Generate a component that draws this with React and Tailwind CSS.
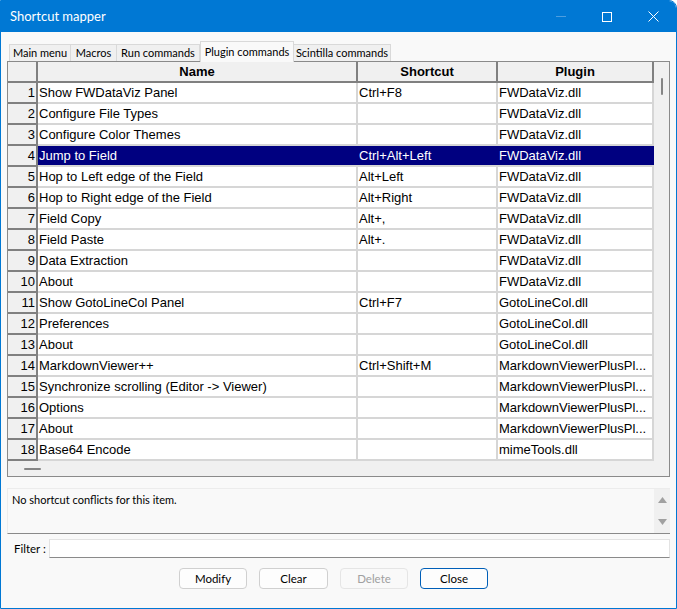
import React from "react";

const rows = [
    ["Show FWDataViz Panel", "Ctrl+F8", "FWDataViz.dll"],
    ["Configure File Types", "", "FWDataViz.dll"],
    ["Configure Color Themes", "", "FWDataViz.dll"],
    ["Jump to Field", "Ctrl+Alt+Left", "FWDataViz.dll"],
    ["Hop to Left edge of the Field", "Alt+Left", "FWDataViz.dll"],
    ["Hop to Right edge of the Field", "Alt+Right", "FWDataViz.dll"],
    ["Field Copy", "Alt+,", "FWDataViz.dll"],
    ["Field Paste", "Alt+.", "FWDataViz.dll"],
    ["Data Extraction", "", "FWDataViz.dll"],
    ["About", "", "FWDataViz.dll"],
    ["Show GotoLineCol Panel", "Ctrl+F7", "GotoLineCol.dll"],
    ["Preferences", "", "GotoLineCol.dll"],
    ["About", "", "GotoLineCol.dll"],
    ["MarkdownViewer++", "Ctrl+Shift+M", "MarkdownViewerPlusPl..."],
    ["Synchronize scrolling (Editor -> Viewer)", "", "MarkdownViewerPlusPl..."],
    ["Options", "", "MarkdownViewerPlusPl..."],
    ["About", "", "MarkdownViewerPlusPl..."],
    ["Base64 Encode", "", "mimeTools.dll"],
];

const tabs = [
    { label: "Main menu", w: "w-[62px]" },
    { label: "Macros", w: "w-[46px]" },
    { label: "Run commands", w: "w-[83px]" },
    { label: "Plugin commands", w: "w-[94px]", active: true },
    { label: "Scintilla commands", w: "w-[97px]" },
];

export default function App() {
    const selected = 3;

    return (
        <div className="w-[677px] h-[609px] flex flex-col bg-[#f9f9f9] border border-[#0078d4] rounded-tr-lg overflow-hidden font-['Lato',sans-serif] text-[11px] text-black">

            {/* TITLE BAR */}
            <div className="h-[31px] shrink-0 bg-[#0078d4] flex items-center pl-[9px] text-white">
                <span className="text-[13px] flex-1">Shortcut mapper</span>
                <div className="flex items-center h-full">
                    <div className="w-[46px] h-full flex items-center justify-center">
                        <div className="w-[10px] h-px bg-[#4d9ee0]"></div>
                    </div>
                    <div className="w-[46px] h-full flex items-center justify-center">
                        <div className="w-[10px] h-[10px] border border-white"></div>
                    </div>
                    <div className="w-[46px] h-full flex items-center justify-center">
                        <svg width="11" height="11" viewBox="0 0 11 11">
                            <path d="M0.5 0.5 L10.5 10.5 M10.5 0.5 L0.5 10.5" stroke="white" strokeWidth="1" />
                        </svg>
                    </div>
                </div>
            </div>

            <div className="flex-1 flex flex-col px-[6px]">

                {/* TABS */}
                <div className="h-[29px] flex items-end pl-[2px]">
                    {tabs.map((t) =>
                        t.active ? (
                            <div key={t.label} className={`${t.w} h-[21px] -mb-px relative z-10 bg-[#f9f9f9] border border-b-0 border-[#d9d9d9] flex items-start pt-[2px] justify-center whitespace-nowrap`}>
                                {t.label}
                            </div>
                        ) : (
                            <div key={t.label} className={`${t.w} h-[17px] bg-[#f0f0f0] border border-l-0 first:border-l border-b-0 border-[#d9d9d9] flex items-center justify-center whitespace-nowrap`}>
                                {t.label}
                            </div>
                        )
                    )}
                </div>

                {/* GRID */}
                <div className="h-[416px] border border-[#8a8a8a] flex flex-col bg-[#f0f0f0] font-['Liberation_Sans',Arial,sans-serif] text-[13px]">
                    <div className="flex">
                        <div className="w-[646px] flex flex-col">
                            <div className="h-[21px] flex font-bold bg-[#f0f0f0]">
                                <div className="w-[30px] border-r-2 border-b-2 border-[#808080]"></div>
                                <div className="w-[320px] border-r-2 border-b-2 border-[#808080] flex items-center justify-center">Name</div>
                                <div className="w-[140px] border-r-2 border-b-2 border-[#808080] flex items-center justify-center">Shortcut</div>
                                <div className="w-[156px] border-r-2 border-b-2 border-[#808080] flex items-center justify-center">Plugin</div>
                            </div>
                            {rows.map((r, i) => {
                                const sel = i === selected;
                                const cell = sel
                                    ? "bg-[#000080] text-white border-b-2 border-[#d6d6d6]"
                                    : "bg-white border-r-2 border-b-2 border-[#d6d6d6]";
                                return (
                                    <div key={i} className="h-[21px] flex">
                                        <div className="w-[30px] bg-[#f0f0f0] border-r-2 border-b-2 border-[#808080] flex items-center justify-end pr-px">
                                            {i + 1}
                                        </div>
                                        <div className={`w-[320px] ${cell} flex items-center pl-[1px] whitespace-nowrap overflow-hidden`}>{r[0]}</div>
                                        <div className={`w-[140px] ${cell} flex items-center pl-[1px] whitespace-nowrap overflow-hidden`}>{r[1]}</div>
                                        <div className={`w-[156px] ${cell} flex items-center pl-[1px] whitespace-nowrap overflow-hidden`}>{r[2]}</div>
                                    </div>
                                );
                            })}
                        </div>
                        {/* vertical scrollbar */}
                        <div className="flex-1 flex justify-center pt-[16px] pl-[1px]">
                            <div className="w-[2px] h-[17px] bg-[#858585] rounded-full"></div>
                        </div>
                    </div>
                    {/* horizontal scrollbar */}
                    <div className="flex-1 flex items-center pl-[16px]">
                        <div className="w-[17px] h-[2px] bg-[#858585] rounded-full"></div>
                    </div>
                </div>

                {/* INFO BOX */}
                <div className="mt-[11px] h-[46px] flex bg-[#f9f9f9] border-t border-l border-[#ececec] border-b border-b-[#8a8a8a]">
                    <div className="flex-1 pl-[4px] pt-[3px]">No shortcut conflicts for this item.</div>
                    <div className="w-[16px] bg-[#f0f0f0] flex flex-col items-center justify-between py-[8px]">
                        <svg width="9" height="6" viewBox="0 0 9 6"><path d="M4.5 0 L9 6 L0 6 Z" fill="#a0a0a0" /></svg>
                        <svg width="9" height="6" viewBox="0 0 9 6"><path d="M0 0 L9 0 L4.5 6 Z" fill="#a0a0a0" /></svg>
                    </div>
                </div>

                {/* FILTER */}
                <div className="mt-[5px] flex items-center h-[19px]">
                    <span className="w-[42px] pl-[7px] whitespace-nowrap text-[11.5px]">Filter :</span>
                    <div className="flex-1 h-[19px] bg-white border border-[#e3e3e3] border-b-[#8a8a8a]"></div>
                </div>

                {/* BUTTONS */}
                <div className="mt-[10px] flex gap-[12px] pl-[172px] text-[11.5px]">
                    <button className="w-[68px] h-[21px] rounded-[4px] border border-[#d0d0d0] bg-[#fdfdfd]">Modify</button>
                    <button className="w-[69px] h-[21px] rounded-[4px] border border-[#d0d0d0] bg-[#fdfdfd]">Clear</button>
                    <button className="w-[68px] h-[21px] rounded-[4px] border border-[#e5e5e5] bg-[#f9f9f9] text-[#a0a0a0]">Delete</button>
                    <button className="w-[68px] h-[21px] rounded-[4px] border border-[#005fb8] bg-[#fdfdfd]">Close</button>
                </div>
            </div>
        </div>
    );
}
